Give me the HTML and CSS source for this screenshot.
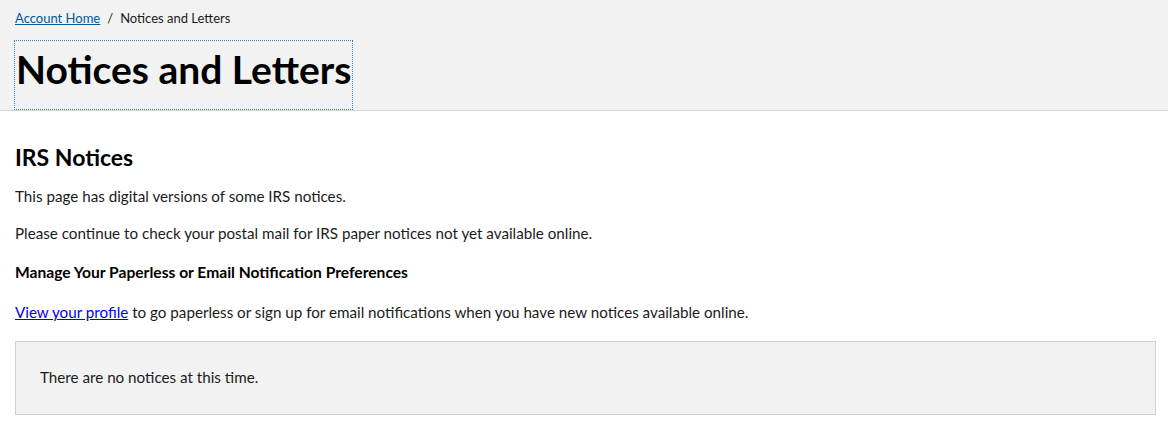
FILE: index.html
```html
<!DOCTYPE html>
<html lang="en">
<head>
<meta charset="utf-8">
<title>Notices and Letters</title>
<link rel="stylesheet" href="styles.css">
</head>
<body>
<header class="page-header">
  <nav class="breadcrumb">
    <a href="#" class="crumb-link">Account Home</a>
    <span class="crumb-sep">/</span>
    <span class="crumb-current">Notices and Letters</span>
  </nav>
  <h1 class="page-title">Notices and Letters</h1>
</header>
<main class="content">
  <h2 class="section-title">IRS Notices</h2>
  <p class="para">This page has digital versions of some IRS notices.</p>
  <p class="para gap-after">Please continue to check your postal mail for IRS paper notices not yet available online.</p>
  <p class="para strong">Manage Your Paperless or Email Notification Preferences</p>
  <p class="para"><a href="#" class="link">View your profile</a> to go paperless or sign up for email notifications when you have new notices available online.</p>
  <div class="empty-box">There are no notices at this time.</div>
</main>
</body>
</html>
```

FILE: styles.css
```css
* { box-sizing: border-box; }
html, body { margin: 0; padding: 0; background: #fff; }
body {
  font-family: "Lato", "Open Sans", sans-serif;
  color: #1b1b1b;
}
.page-header {
  background: #f2f2f2;
  border-bottom: 1px solid #d6d6d6;
  padding: 9px 15px 0 15px;
  height: 111px;
}
.breadcrumb {
  font-size: 13px;
  line-height: 18px;
  display: flex;
  gap: 7px;
}
.crumb-link { color: #00599c; text-decoration: underline; }
.crumb-sep { color: #1b1b1b; }
.crumb-current { color: #1b1b1b; }
.page-title {
  display: inline-block;
  margin: 14px 0 0 0;
  font-size: 39px;
  line-height: 56px;
  padding: 0 1px 12px 1px;
  font-weight: 700;
  color: #000;
  outline: 1px dotted #2f7ec6;
}
.content { padding: 32px 15px 0 15px; }
.section-title {
  margin: 0 0 14px 0;
  font-size: 23px;
  line-height: 28px;
  font-weight: 700;
  color: #000;
}
.para {
  margin: 0 0 15px 0;
  font-size: 15.2px;
  line-height: 22px;
  color: #1b1b1b;
}
.gap-after { margin-bottom: 17px; }
.strong { font-weight: 700; color: #000; margin-bottom: 18px; font-size: 15.6px; }
.link { color: #0000ee; text-decoration: underline; }
.empty-box {
  margin-top: 18px;
  background: #f2f2f2;
  border: 1px solid #d0d0d0;
  height: 74px;
  padding: 24px 24px;
  font-size: 15.2px;
  line-height: 22px;
  width: 1141px;
}
```
